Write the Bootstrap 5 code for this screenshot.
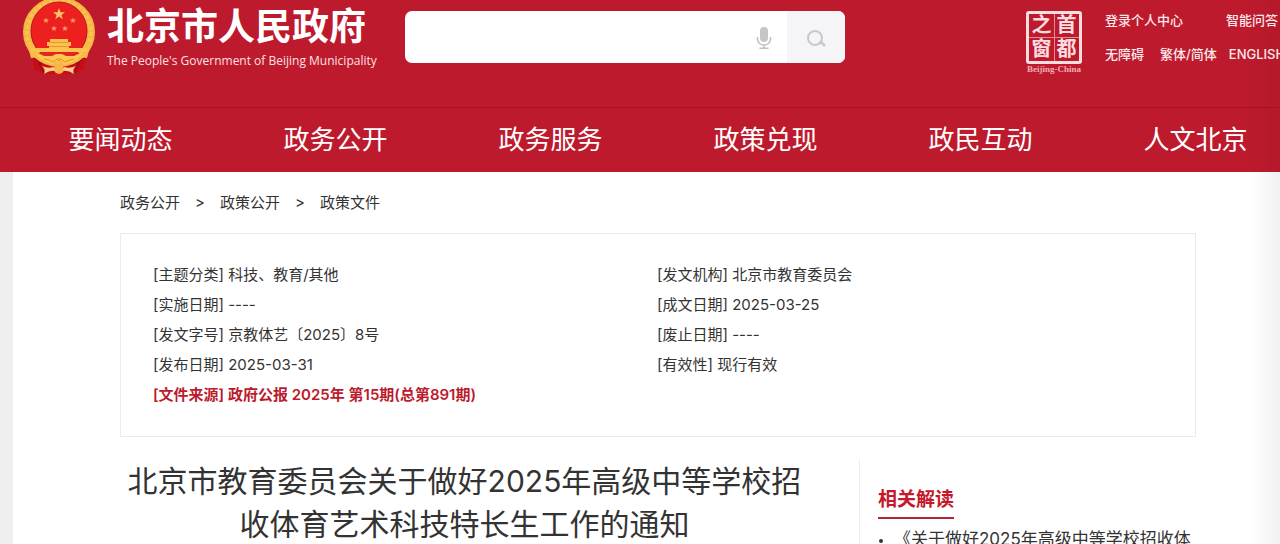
<!DOCTYPE html>
<html lang="zh-CN">
<head>
<meta charset="utf-8">
<meta name="viewport" content="width=device-width, initial-scale=1">
<title>北京市教育委员会关于做好2025年高级中等学校招收体育艺术科技特长生工作的通知</title>
<link href="https://cdn.jsdelivr.net/npm/bootstrap@5.3.0/dist/css/bootstrap.min.css" rel="stylesheet">
<style>
  body { font-family: Inter, "Noto Sans CJK SC", sans-serif; font-size: 15px; line-height: 30px; color: #333; background: #efefef; overflow-x: hidden; }
  a { color: inherit; text-decoration: none; }
  .site-header { background: linear-gradient(90deg, #be1a2d calc(100% - 40px), #b5192b); color: #fff; }
  .masthead { height: 107px; padding-left: 22px; }
  .emblem { width: 74px; height: 76px; }
  .brand { width: 383px; }
  .brand-text { padding: 4px 0 0 11px; white-space: nowrap; }
  .brand-cn { font-size: 37px; line-height: 45px; font-weight: 700; }
  .brand-en { font: 400 12px/24px "Open Sans", sans-serif; color: #fde0e4; }
  .search-box { flex: 0 0 auto; width: 440px; max-width: 50vw; height: 52px; margin-top: 11px; border-radius: 7px; background: #fff; overflow: hidden; }
  .search-box .form-control { border: 0; box-shadow: none; background: transparent; }
  .search-box .btn { border: 0; border-radius: 0; flex-shrink: 0; }
  .mic-btn { width: 47px; }
  .find-btn, .find-btn:hover { width: 58px; background: #f5f5f8; }
  .capital-window { margin: 11px 0 0 178px; width: 62px; }
  .seal { width: 56px; height: 53px; border: 3px solid #fbdde0; border-radius: 3px; margin: 0 3px; display: grid; grid-template-columns: 1fr 1fr; background: linear-gradient(#e68b96, #e68b96) center / 1px 100% no-repeat, linear-gradient(#e68b96, #e68b96) center / 100% 1px no-repeat; }
  .seal span { font-size: 20px; line-height: 23px; font-weight: 700; text-align: center; color: #fbdde0; }
  .seal-caption { font: 700 9px/10px "Liberation Serif", serif; color: #f2adb5; text-align: center; white-space: nowrap; }
  .user-links { width: 173px; margin: 3px 0 0 20px; font-size: 13px; line-height: 34px; font-weight: 500; white-space: nowrap; color: #fde8ea; }
  .main-nav { border-top: 1px solid #a01426; height: 65px; }
  .main-nav ul { margin: 0; padding: 0 0 0 13px; width: calc(100% + 23px); }
  .main-nav .nav-link { color: #fff; font-size: 26px; line-height: 64px; font-weight: 400; padding: 0; text-align: center; white-space: nowrap; }
  .sheet { margin-left: 13px; background: linear-gradient(90deg, #fff calc(100% - 30px), #f1f1f1); padding: 16px 84px 0 107px; min-height: calc(100vh - 172px); }
  .crumbs { --bs-breadcrumb-divider: ">"; --bs-breadcrumb-divider-color: #333; --bs-breadcrumb-item-padding-x: 15px; margin: 0; }
  .crumbs .breadcrumb-item.active { color: #333; }
  .doc-meta { border: 1px solid #ebebe8; margin-top: 15px; padding: 26px 32px; --bs-gutter-x: 0; }
  .doc-meta .meta-left { width: 504px; padding: 0; }
  .doc-meta p { margin: 0; }
  .source-link { color: #bb1b2c; font-weight: 600; }
  .doc-title { font-size: 30px; line-height: 43px; font-weight: 400; text-align: center; margin: 0; padding: 23px 55px 0 5px; }
  .related { flex: 0 0 337px; border-left: 1px solid #ededea; padding: 26px 0 0 18px; margin-top: 22px; }
  .related h2 { display: inline-block; font-size: 19px; line-height: 30px; font-weight: 700; color: #c4182b; border-bottom: 2px solid #b32236; margin: 0; padding-bottom: 2px; }
  .related ul { padding-left: 16px; margin: 5px 0 0; font-size: 17px; }
  .related li::marker { font-size: 12px; }
</style>
</head>
<body>
<header class="site-header overflow-hidden">
  <div class="masthead d-flex align-items-start">
    <a href="#" class="brand d-flex flex-shrink-0">
      <svg class="emblem flex-shrink-0" viewBox="0 0 74 76" aria-hidden="true">
        <path d="M10 50 12 70 24 74H49L62 70 65 50Z" fill="#c90d17"/>
        <path d="M16 61l6 12M58 61l-6 12M12 57l8 7M62 57l-8 7" stroke="#9f101c" stroke-width="2"/>
        <ellipse cx="37" cy="32" rx="32" ry="31" fill="none" stroke="#f5b542" stroke-width="8"/>
        <ellipse cx="37" cy="32" rx="32" ry="31" fill="none" stroke="#fac252" stroke-width="4" stroke-dasharray="4 2"/>
        <path d="M5 43l4 15 9-1-7-13zM69 43l-4 15-9-1 7-13z" fill="#f8bb47"/>
        <ellipse cx="37" cy="31" rx="28" ry="29" fill="#ec211f" stroke="#bd1720" stroke-width="1"/>
        <path d="M37 8l1.500 4.200H43l-3.600 2.700 1.400 4.400-3.800-2.700-3.800 2.700 1.400-4.400-3.600-2.700h4.500z" fill="#ffc36a"/>
        <g fill="#ff9a68">
          <path id="small-star" d="M24 17.500l.8 2h2.200l-1.700 1.400.6 2.100-1.900-1.200-1.900 1.200.6-2.100-1.700-1.400h2.200z"/>
          <use href="#small-star" x="27"/><use href="#small-star" x="8" y="8"/><use href="#small-star" x="19" y="8"/>
        </g>
        <path d="M28 39h18v3h3v4h-2v2H65v4H9v-4h18v-2h-2v-4h3z" fill="#ffc14e"/>
        <path d="M28 42.500h18M27 46.500h20" stroke="#e8953a" stroke-width="1"/>
        <path d="M13 53h48c-4 6-10 9-17 11l-7-4-7 4c-7-2-13-5-17-11z" fill="#ffc650"/>
        <path d="M16 53h42l-6 3h-8l-4-2h-6l-4 2h-8z" fill="#e3261f"/>
        <path d="M22 59q6 1 9 3l4-3h4l4 3q3-2 9-3" fill="none" stroke="#e0902f" stroke-width="1"/>
        <circle cx="37" cy="69" r="5" fill="#f8b64a"/>
        <path d="M32 67q-6 2-12-1 4 3 2 8 6-4 11-3zM42 67q6 2 12-1-4 3-2 8-6-4-11-3z" fill="#ffd08a"/>
      </svg>
      <span class="brand-text">
        <span class="brand-cn d-block">北京市人民政府</span>
        <span class="brand-en d-block">The People's Government of Beijing Municipality</span>
      </span>
    </a>
    <form class="search-box d-flex" role="search">
      <input class="form-control" type="search" aria-label="搜索">
      <button class="btn mic-btn p-0" type="button" aria-label="语音输入">
        <svg width="16" height="24" viewBox="0 0 16 24" fill="none" stroke="#c1c1c1" stroke-width="1.500">
          <rect x="4" y="1" width="8" height="15" rx="4" fill="#c6c6c6" stroke="none"/>
          <path d="M1.500 11v2a6.500 6 0 0 0 13 0v-2M8 19v3M3.500 22.200h9"/>
        </svg>
      </button>
      <button class="btn find-btn p-0" type="submit" aria-label="搜索">
        <svg width="20" height="20" viewBox="0 0 20 20" fill="none" stroke="#c9c9cd" stroke-width="2">
          <circle cx="9" cy="9" r="7"/><path d="M13 14l2-1 4 4" stroke-width="2.500"/>
        </svg>
      </button>
    </form>
    <a href="#" class="capital-window flex-shrink-0">
      <span class="seal"><span>之</span><span>首</span><span>窗</span><span>都</span></span>
      <span class="seal-caption d-block">Beijing-China</span>
    </a>
    <div class="user-links flex-shrink-0">
      <div class="d-flex"><a href="#">登录个人中心</a><a href="#" class="ms-auto">智能问答</a></div>
      <div class="d-flex"><a href="#" class="me-3">无障碍</a><a href="#">繁体/简体</a><a href="#" class="ms-2 ps-1">ENGLISH</a></div>
    </div>
  </div>
  <nav class="main-nav" aria-label="主导航">
    <ul class="nav nav-fill flex-nowrap">
      <li class="nav-item col"><a class="nav-link" href="#">要闻动态</a></li>
      <li class="nav-item col"><a class="nav-link" href="#">政务公开</a></li>
      <li class="nav-item col"><a class="nav-link" href="#">政务服务</a></li>
      <li class="nav-item col"><a class="nav-link" href="#">政策兑现</a></li>
      <li class="nav-item col"><a class="nav-link" href="#">政民互动</a></li>
      <li class="nav-item col"><a class="nav-link" href="#">人文北京</a></li>
    </ul>
  </nav>
</header>
<main class="sheet">
  <nav aria-label="面包屑">
    <ol class="breadcrumb crumbs">
      <li class="breadcrumb-item"><a href="#">政务公开</a></li>
      <li class="breadcrumb-item"><a href="#">政策公开</a></li>
      <li class="breadcrumb-item active">政策文件</li>
    </ol>
  </nav>
  <section class="doc-meta row mx-0">
    <div class="meta-left">
      <p>[主题分类] 科技、教育/其他</p>
      <p>[实施日期] ----</p>
      <p>[发文字号] 京教体艺〔2025〕8号</p>
      <p>[发布日期] 2025-03-31</p>
      <p><a href="#" class="source-link">[文件来源] 政府公报 2025年 第15期(总第891期)</a></p>
    </div>
    <div class="col p-0">
      <p>[发文机构] 北京市教育委员会</p>
      <p>[成文日期] 2025-03-25</p>
      <p>[废止日期] ----</p>
      <p>[有效性] 现行有效</p>
    </div>
  </section>
  <div class="d-flex">
    <article class="flex-fill">
      <h1 class="doc-title">北京市教育委员会关于做好2025年高级中等学校招收体育艺术科技特长生工作的通知</h1>
    </article>
    <aside class="related">
      <h2>相关解读</h2>
      <ul><li><a href="#">《关于做好2025年高级中等学校招收体</a></li></ul>
    </aside>
  </div>
</main>
<script src="https://cdn.jsdelivr.net/npm/bootstrap@5.3.0/dist/js/bootstrap.bundle.min.js"></script>
</body>
</html>
